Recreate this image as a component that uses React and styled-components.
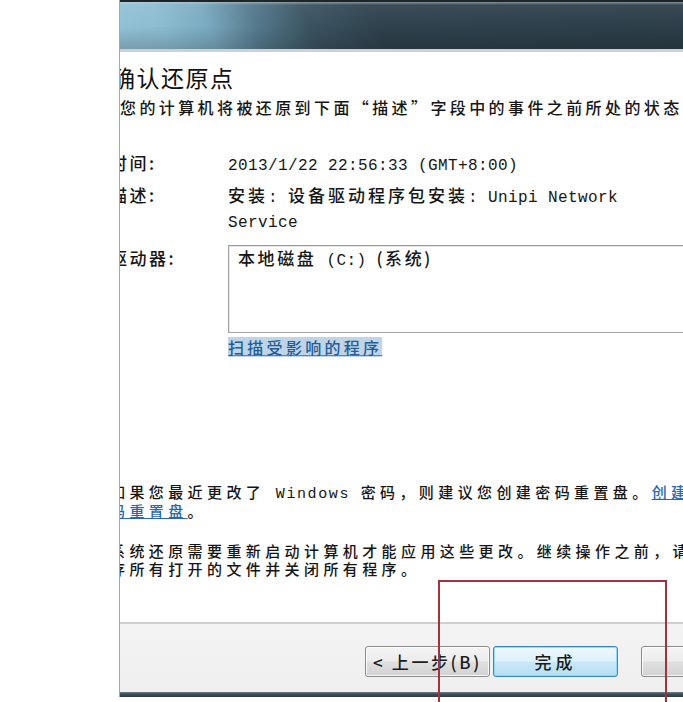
import React from 'react';
import styled, { createGlobalStyle } from 'styled-components';

const Global = createGlobalStyle`
  html, body { margin: 0; padding: 0; background: #ffffff; }
  body {
    width: 683px;
    height: 702px;
    overflow: hidden;
    font-family: "Noto Sans CJK SC", "Noto Sans", sans-serif;
  }
`;

const Page = styled.div`
  position: relative;
  width: 683px;
  height: 702px;
  box-sizing: border-box;
  padding-left: 119px;
  overflow: hidden;
  background: #ffffff;
`;

const Dialog = styled.div`
  width: 720px;
  height: 697px;
  border-left: 1px solid #a7a7a7;
  display: flex;
  flex-direction: column;
  overflow: hidden;
  background: #ffffff;
`;

const Header = styled.div`
  flex: none;
  height: 52px;
  box-sizing: border-box;
  border-top: 2px solid #1f2427;
  border-bottom: 3px solid #cdd1d3;
  background:
    linear-gradient(180deg, rgba(200, 215, 222, 0.55) 0, rgba(255, 255, 255, 0.06) 3px, rgba(255, 255, 255, 0) 50%, rgba(0, 0, 0, 0.18) 100%),
    linear-gradient(70deg, #93c2d6 0px, #8dbdd2 45px, #7aaac0 90px, #567b8e 135px, #3b5462 185px, #2f424e 250px, #2c3d48 100%);
`;

const Content = styled.div`
  flex: 1;
  display: flex;
  flex-direction: column;
  margin-left: -10px;
  padding: 12px 0 44px 0;
  color: #161616;
  white-space: nowrap;
  font-weight: 500;
`;

const Title = styled.div`
  margin-left: 2px;
  font-size: 23px;
  line-height: 26px;
  letter-spacing: 1.5px;
  font-weight: 400;
  color: #111111;
`;

const Subtitle = styled.div`
  margin: 7px 0 0 10px;
  font-size: 16px;
  line-height: 20px;
  letter-spacing: 3.4px;
`;

const Fields = styled.div`
  margin-top: 33px;
  display: flex;
  flex-direction: column;
`;

const FieldRow = styled.div`
  display: flex;
  margin-top: ${p => p.$gap || 0}px;
`;

const Label = styled.div`
  width: 118px;
  flex: none;
  font-size: 17px;
  line-height: 25px;
  letter-spacing: 2.5px;
`;

const Value = styled.div`
  font-size: 17px;
  line-height: 25px;
  letter-spacing: 3px;
`;

const Latin = styled.span`
  font-family: "Liberation Mono", "Courier New", monospace;
  font-size: ${p => p.$size || 16}px;
  letter-spacing: ${p => p.$spacing ?? 0.4}px;
  font-weight: 400;
  line-height: 1;
`;

const DriveColumn = styled.div`
  display: flex;
  flex-direction: column;
  align-items: flex-start;
`;

const DriveBox = styled.div`
  width: 560px;
  height: 88px;
  box-sizing: border-box;
  border: 1px solid #a3a3a3;
  border-top-color: #9a9a9a;
  box-shadow: inset 1px 1px 0 #e6e6e6;
  padding: 2px 9px;
  font-size: 17px;
  line-height: 20px;
  letter-spacing: 2.6px;
`;

const ScanLink = styled.span`
  margin-top: 4px;
  font-size: 16px;
  line-height: 20px;
  letter-spacing: 3.3px;
  color: #1f5c98;
  background: #bfd4e6;
  text-decoration: underline;
  text-decoration-color: #5a86b0;
`;

const Notes = styled.div`
  margin-top: auto;
  display: flex;
  flex-direction: column;
  gap: 22px;
`;

const Para = styled.div`
  font-size: 15px;
  line-height: 18px;
  letter-spacing: 4.4px;
  color: #151515;
`;

const Link = styled.span`
  color: #2a67ad;
  text-decoration: underline;
`;

const Footer = styled.div`
  flex: none;
  height: 70px;
  box-sizing: border-box;
  border-top: 2px solid #cfcfcf;
  background: linear-gradient(180deg, #f3f3f3 0%, #efefef 100%);
  padding: 22px 0 0 245px;
  display: flex;
  align-items: flex-start;
`;

const Button = styled.button`
  flex: none;
  width: 125px;
  height: 31px;
  margin-left: ${p => p.$gap || 0}px;
  box-sizing: border-box;
  padding: 0;
  border: 1px solid ${p => (p.$primary ? '#3a86bf' : '#8c8c8c')};
  border-radius: 3px;
  background: ${p =>
    p.$primary
      ? 'linear-gradient(180deg, #eef8fd 0%, #dff2fc 48%, #c8e8f8 52%, #b6def3 100%)'
      : 'linear-gradient(180deg, #f4f4f4 0%, #ececec 48%, #dfdfdf 52%, #d2d2d2 100%)'};
  box-shadow: inset 0 0 0 1px ${p => (p.$primary ? 'rgba(140, 215, 245, 0.9)' : 'rgba(255, 255, 255, 0.8)')};
  font-family: "Noto Sans CJK SC", "Noto Sans", sans-serif;
  font-size: 17px;
  font-weight: 500;
  line-height: 29px;
  letter-spacing: ${p => (p.$primary ? 4 : 2.6)}px;
  color: #1b1b1b;
  text-align: center;
`;

const BottomBar = styled.div`
  flex: none;
  height: 5px;
  background: linear-gradient(180deg, #6f8088 0%, #3f5059 40%, #2c3b43 100%);
`;

const Annotation = styled.div`
  position: absolute;
  left: 438px;
  top: 580px;
  width: 229px;
  height: 140px;
  box-sizing: border-box;
  border: 2px solid #a3323c;
  border-bottom: none;
  pointer-events: none;
`;

export default function App() {
  return (
    <>
      <Global />
      <Page>
        <Dialog>
          <Header />
          <Content>
            <Title>确认还原点</Title>
            <Subtitle>您的计算机将被还原到下面“描述”字段中的事件之前所处的状态</Subtitle>
            <Fields>
              <FieldRow>
                <Label>时间:</Label>
                <Value>
                  <Latin>2013/1/22 22:56:33 (GMT+8:00)</Latin>
                </Value>
              </FieldRow>
              <FieldRow $gap={7}>
                <Label>描述:</Label>
                <Value>
                  安装<Latin>: </Latin>设备驱动程序包安装<Latin>: Unipi Network</Latin>
                  <br />
                  <Latin>Service</Latin>
                </Value>
              </FieldRow>
              <FieldRow $gap={13}>
                <Label>驱动器:</Label>
                <DriveColumn>
                  <DriveBox>
                    本地磁盘<Latin> (C:) </Latin>(系统)
                  </DriveBox>
                  <ScanLink>扫描受影响的程序</ScanLink>
                </DriveColumn>
              </FieldRow>
            </Fields>
            <Notes>
              <Para>
                如果您最近更改了<Latin $size={15} $spacing={1.6}> Windows </Latin>密码，则建议您创建密码重置盘。<Link>创建密</Link>
                <br />
                <Link>码重置盘</Link>。
              </Para>
              <Para>
                系统还原需要重新启动计算机才能应用这些更改。继续操作之前，请保
                <br />
                存所有打开的文件并关闭所有程序。
              </Para>
            </Notes>
          </Content>
          <Footer>
            <Button>&lt; 上一步(B)</Button>
            <Button $primary $gap={3}>完成</Button>
            <Button $gap={23}>取消</Button>
          </Footer>
          <BottomBar />
        </Dialog>
        <Annotation />
      </Page>
    </>
  );
}
